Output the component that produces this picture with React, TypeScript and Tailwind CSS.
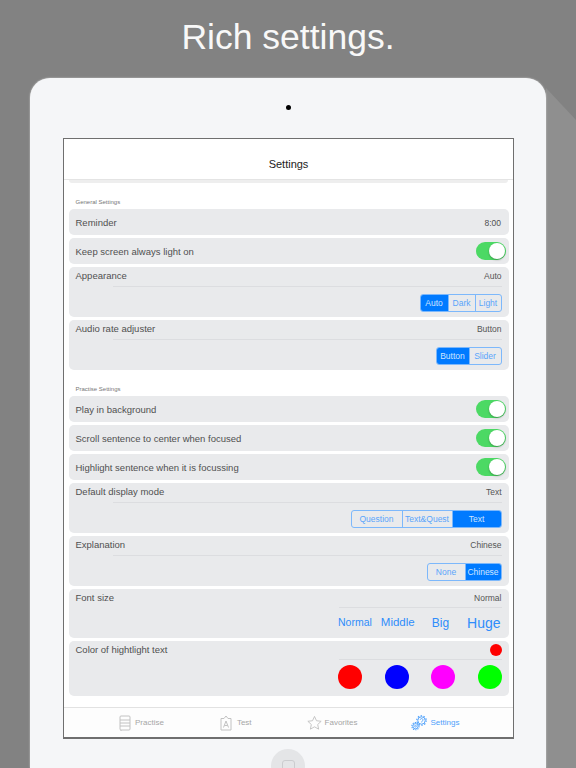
import React from "react";

const Seg = ({ items, active, widths }: { items: string[]; active: number; widths: string[] }) => (
  <div className="flex h-[18px] rounded-[3px] border border-[#7db8fb] overflow-hidden text-[8.5px] leading-[16px] text-[#5aa5fb]">
    {items.map((t, i) => (
      <div
        key={t}
        className={`${widths[i]} text-center whitespace-nowrap ${i > 0 ? "border-l border-[#7db8fb]" : ""} ${i === active ? "bg-[#007aff] text-[#cfe5ff]" : ""}`}
      >
        {t}
      </div>
    ))}
  </div>
);

const Toggle = () => (
  <div className="relative w-[30px] h-[18px] rounded-full bg-[#4cd964]">
    <div className="absolute right-[1px] top-[1px] w-[16px] h-[16px] rounded-full bg-white shadow-[0_1px_2px_rgba(0,0,0,0.3)]" />
  </div>
);

const Simple = ({ label, right }: { label: string; right: React.ReactNode }) => (
  <div className="h-[26px] rounded-[5px] bg-[#e9eaec] flex items-center justify-between pl-[7px] pr-[2.5px] text-[9.5px] text-[#505050]">
    <span className="pt-[2px]">{label}</span>
    {right}
  </div>
);

const Detail = ({
  label,
  value,
  children,
  h = "h-[50px]",
  head = "h-[19px]",
  line = "ml-[37px]",
}: {
  label: string;
  value: React.ReactNode;
  children: React.ReactNode;
  h?: string;
  head?: string;
  line?: string;
}) => (
  <div className={`${h} rounded-[5px] bg-[#e9eaec] px-[7px] flex flex-col`}>
    <div className={`${head} flex items-center justify-between text-[9.5px] text-[#505050]`}>
      <span>{label}</span>
      <span className="text-[8.5px] text-[#555]">{value}</span>
    </div>
    <div className={`${line} h-px bg-[#dcdde0]`} />
    {children}
  </div>
);

const Body = ({ children }: { children: React.ReactNode }) => (
  <div className="flex justify-end pt-[7px]">{children}</div>
);

const Label = ({ children }: { children: string }) => (
  <div className="h-[13px] pl-[7px] text-[6px] leading-[13px] text-[#777]">{children}</div>
);

const Dot = ({ c }: { c: string }) => <div className={`w-[24px] h-[24px] rounded-full ${c}`} />;

export default function App() {
  return (
    <div className="relative w-[576px] h-[768px] overflow-hidden bg-[#828282] font-['Liberation_Sans',Arial,sans-serif]">
      <div className="absolute left-[546px] top-[88px] w-[30px] h-[680px] bg-[#8f8f8f] [clip-path:polygon(0_0,100%_32px,100%_100%,0_100%)]" />
      <div className="relative h-[78px] flex justify-center pt-[14px] text-[35.5px] leading-[46px] text-[#f8f8f8]">Rich settings.</div>
      <div className="relative ml-[30px] w-[516px] h-[690px] rounded-t-[20px] bg-[#f5f6f8] shadow-[0_0_2px_rgba(255,255,255,0.6)] flex flex-col">
        <div className="mt-[27px] ml-[256px] w-[5px] h-[5px] rounded-full bg-black" />
        <div className="mt-[28px] ml-[33px] w-[451px] h-[601px] border border-[#6f6f6f] border-b-2 bg-white flex flex-col">
          <div className="h-[41px] shrink-0 flex items-center justify-center pt-[11px] text-[11px] text-[#222] border-b border-[#e4e4e4]">Settings</div>
          <div className="h-[3px] mx-[5px] bg-[#eeeeee] rounded-b-[3px]" />
          <div className="flex-1 pl-[4.5px] pr-[4.5px] pt-[13px]">
            <Label>General Settings</Label>
            <div className="flex flex-col gap-[3px]">
              <Simple label="Reminder" right={<span className="pr-[5px] pt-[2px] text-[8.5px]">8:00</span>} />
              <Simple label="Keep screen always light on" right={<Toggle />} />
              <Detail label="Appearance" value="Auto">
                <Body><Seg items={["Auto", "Dark", "Light"]} active={0} widths={["w-[27px]", "w-[27px]", "w-[26px]"]} /></Body>
              </Detail>
              <Detail label="Audio rate adjuster" value="Button">
                <Body><Seg items={["Button", "Slider"]} active={0} widths={["w-[32px]", "w-[32px]"]} /></Body>
              </Detail>
            </div>
            <div className="h-[13px]" />
            <Label>Practise Settings</Label>
            <div className="flex flex-col gap-[3px]">
              <Simple label="Play in background" right={<Toggle />} />
              <Simple label="Scroll sentence to center when focused" right={<Toggle />} />
              <Simple label="Highlight sentence when it is focussing" right={<Toggle />} />
              <Detail label="Default display mode" value="Text">
                <Body><Seg items={["Question", "Text&Quest", "Text"]} active={2} widths={["w-[50px]", "w-[50px]", "w-[49px]"]} /></Body>
              </Detail>
              <Detail label="Explanation" value="Chinese">
                <Body><Seg items={["None", "Chinese"]} active={1} widths={["w-[37px]", "w-[36px]"]} /></Body>
              </Detail>
              <Detail label="Font size" value="Normal" h="h-[49px]" head="h-[18px]" line="ml-[263px]">
                <div className="ml-[262.5px] h-[30px] flex items-center text-[#2f8dfb] whitespace-nowrap">
                  <span className="text-[10.5px]">Normal</span>
                  <span className="text-[11.5px] ml-[9px]">Middle</span>
                  <span className="text-[12px] ml-[17px]">Big</span>
                  <span className="text-[14px] ml-[18px]">Huge</span>
                </div>
              </Detail>
              <Detail
                label="Color of hightlight text"
                value={<span className="block w-[12px] h-[12px] rounded-full bg-[#ff0000]" />}
                h="h-[55px]"
                head="h-[18px]"
                line="ml-[263px]"
              >
                <div className="ml-[262.5px] -mr-[0.5px] pt-[5px] flex justify-between">
                  <Dot c="bg-[#ff0000]" />
                  <Dot c="bg-[#0000ff]" />
                  <Dot c="bg-[#ff00ff]" />
                  <Dot c="bg-[#00ff00]" />
                </div>
              </Detail>
            </div>
          </div>
          <div className="h-[30px] shrink-0 border-t border-[#e2e2e2] bg-[#fdfdfd] flex items-center text-[8px] text-[#a6a6a6]">
            <div className="ml-[55px] flex items-center gap-[4px]">
              <svg width="12" height="16" viewBox="0 0 12 16" fill="none" stroke="#c2c2c2" strokeWidth="1">
                <rect x="1" y="1" width="10" height="14" rx="1" />
                <path d="M1 5h10M1 8h10M1 11h10M2 15v1" />
              </svg>
              <span>Practise</span>
            </div>
            <div className="ml-[56px] flex items-center gap-[5px]">
              <svg width="12" height="16" viewBox="0 0 12 16" fill="none" stroke="#c2c2c2" strokeWidth="1">
                <path d="M1 3.5h3L6 1l2 2.5h3V15H1z" />
                <path d="M3.5 12.5L6 6l2.5 6.5M4.4 10.5h3.2" />
              </svg>
              <span>Test</span>
            </div>
            <div className="ml-[55px] flex items-center gap-[3px]">
              <svg width="15" height="15" viewBox="0 0 16 15" fill="none" stroke="#bdbdbd" strokeWidth="0.9">
                <path d="M8 1l2.1 4.6 5 .6-3.7 3.4 1 5L8 12.1 3.6 14.6l1-5L.9 6.2l5-.6z" />
              </svg>
              <span>Favorites</span>
            </div>
            <div className="ml-[54px] flex items-center gap-[3px] text-[#4ea0fb]">
              <svg width="16" height="16" viewBox="0 0 16 16" fill="none" stroke="#4ea0fb">
                <circle cx="10.5" cy="5.5" r="3.7" strokeWidth="0.9" />
                <circle cx="10.5" cy="5.5" r="4.7" strokeWidth="1.2" strokeDasharray="1.5 1.45" />
                <path d="M9.2 4.8a1.4 1.4 0 1 1 2 1.4l-.6.6v.6" strokeWidth="0.9" />
                <circle cx="4.5" cy="11.2" r="2.6" strokeWidth="0.9" />
                <circle cx="4.5" cy="11.2" r="3.6" strokeWidth="1.1" strokeDasharray="1.2 1.06" />
                <circle cx="4.5" cy="11.2" r="0.9" strokeWidth="0.8" />
              </svg>
              <span>Settings</span>
            </div>
          </div>
        </div>
        <div className="absolute left-[241px] top-[671px] w-[34px] h-[34px] rounded-full bg-[#e4e5e7] flex items-start justify-center pt-[11px]">
          <div className="w-[13px] h-[13px] rounded-[3px] border border-[#cbcccf]" />
        </div>
      </div>
    </div>
  );
}
